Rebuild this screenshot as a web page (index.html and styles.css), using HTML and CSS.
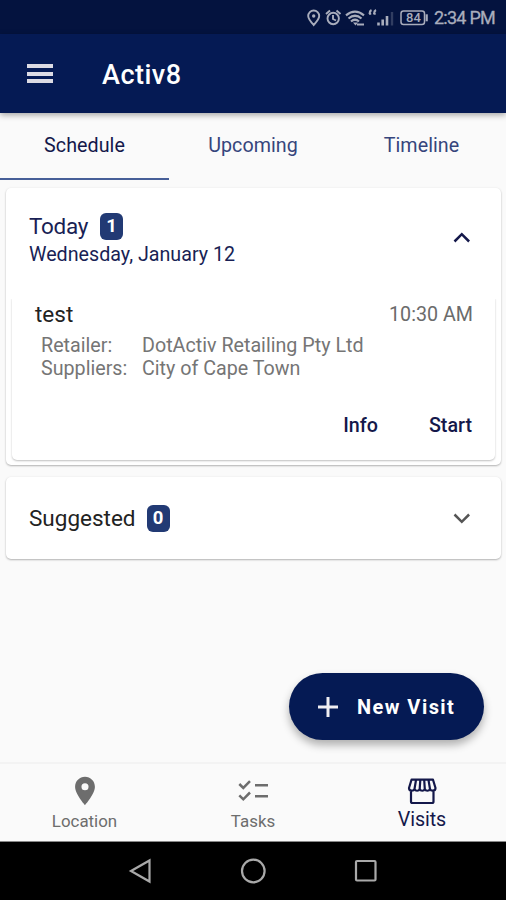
FILE: index.html
```html
<!DOCTYPE html>
<html lang="en">
<head>
<meta charset="utf-8">
<title>Activ8</title>
<link rel="stylesheet" href="styles.css">
</head>
<body>
<div class="app">
  <div class="statusbar">
    <svg class="status-icons" width="122" height="22" viewBox="0 0 122 22" fill="none" stroke="currentColor" stroke-width="1.900">
      <path d="M7.700 19C4.500 15.500 2.200 13 2.200 10A5.400 5.400 0 0 1 13.200 10C13.200 13 10.700 15.500 7.700 19Z"/>
      <circle cx="7.700" cy="10" r="1.700" fill="currentColor" stroke="none"/>
      <circle cx="27.200" cy="12.500" r="5.700"/>
      <path d="M27 9v4l3 1.500M20 8l4-3.500M34.500 8l-4-3.500"/>
      <path d="M40 9.300Q49 2 58 9.300M42.500 12.500Q49 7 55.500 12.500M45 15.500Q49 12 53 15.500" stroke-width="2.200"/>
      <path d="M47 16.500h5l-2.500 3z" fill="currentColor" stroke="none"/>
      <path d="M51 18.500h7" stroke-width="2"/>
      <path d="M65.500 4q-2 1-2 4M70 4q-2 1-2 4M63 7.800h2.200M67.500 7.800h2.200" stroke-width="2"/>
      <path d="M72.500 19.500v-3M76.700 19.500v-6M81 19.500V10" stroke-width="2.600"/>
      <path d="M86 19.500V6" stroke-width="2.400" opacity=".28"/>
      <rect x="95" y="5" width="23.500" height="13.500" rx="2.500" stroke-width="1.500"/>
      <path d="M120.700 8.300v7" stroke-width="2.200"/>
    </svg>
    <span class="battery">84</span>
    <span class="clock">2:34 PM</span>
  </div>
  <header class="appbar">
    <div class="burger"><i></i><i></i><i></i></div>
    <h1>Activ8</h1>
  </header>
  <nav class="tabs">
    <div class="tab active">Schedule</div>
    <div class="tab">Upcoming</div>
    <div class="tab">Timeline</div>
  </nav>
  <main>
    <section class="card today">
      <div class="card-head">
        <div>
          <div class="title"><span class="t-today">Today</span><b class="count">1</b></div>
          <div class="date">Wednesday, January 12</div>
        </div>
        <svg class="chevron" width="18" height="12" viewBox="0 0 18 12"><path d="M1.500 9.500l7.300-7.300 7.300 7.300"/></svg>
      </div>
      <article class="visit">
        <div class="visit-head"><span class="name">test</span><span class="time">10:30 AM</span></div>
        <dl>
          <dt>Retailer:</dt><dd>DotActiv Retailing Pty Ltd</dd>
          <dt>Suppliers:</dt><dd>City of Cape Town</dd>
        </dl>
        <div class="actions"><span>Info</span><span>Start</span></div>
      </article>
    </section>
    <section class="card suggested">
      <div class="title"><span>Suggested</span><b class="count">0</b></div>
      <svg class="chevron" width="18" height="12" viewBox="0 0 18 12"><path d="M1.500 2.500l7.300 7.300 7.300-7.300"/></svg>
    </section>
  </main>
  <div class="fab-row">
    <div class="fab">
      <svg width="20" height="20" viewBox="0 0 20 20" stroke="#f0eef2" stroke-width="3"><path d="M10 0v20M0 10h20"/></svg>
      <span>New Visit</span>
    </div>
  </div>
  <nav class="bottom">
    <div class="item">
      <svg width="34" height="34" viewBox="0 0 24 24" fill="currentColor"><path d="M12 2C8.130 2 5 5.130 5 9c0 5.250 7 13 7 13s7-7.750 7-13c0-3.870-3.130-7-7-7zm0 9.500a2.500 2.500 0 0 1 0-5 2.500 2.500 0 0 1 0 5z"/></svg>
      <span>Location</span>
    </div>
    <div class="item">
      <svg width="34" height="34" viewBox="0 0 34 34" fill="none" stroke="currentColor" stroke-width="2.500"><path d="M3.300 10l4 4L14 7.200M3.300 21.300l4 4 6.700-6.800M19 11.300h13M19 22.300h13"/></svg>
      <span>Tasks</span>
    </div>
    <div class="item selected">
      <svg width="34" height="34" viewBox="0 0 34 34" fill="none" stroke="currentColor" stroke-width="2.200" stroke-linejoin="round"><path d="M6.500 5.700h21.500l2.500 8.300c0 3.300-4.400 3.600-5.500.8-1 2.600-4.200 2.600-5.200 0-1 2.600-4.100 2.600-5.100 0-1 2.600-4.200 2.600-5.200 0-1.100 2.800-5.500 2.500-5.500-.8zM11 6l-1.500 9M15.300 6l-.6 9M19.200 6l.6 9M23.500 6l1.500 9M6 17v10.500q0 1.500 1.500 1.500h19.500q1.500 0 1.500-1.500V17"/></svg>
      <span>Visits</span>
    </div>
  </nav>
  <div class="sysnav">
    <svg width="24" height="26" viewBox="0 0 24 26"><path d="M3 13L21.500 2.500v21z"/></svg>
    <svg width="26" height="26" viewBox="0 0 26 26"><circle cx="13.300" cy="13" r="11.300"/></svg>
    <svg width="24" height="24" viewBox="0 0 24 24"><rect x="2" y="2" width="19.500" height="19.500" rx="1"/></svg>
  </div>
</div>
</body>
</html>
```
FILE: styles.css
```css
* { box-sizing: border-box; margin: 0; padding: 0; }
body { width: 506px; height: 900px; font-family: Roboto, sans-serif; background: #fafafa; overflow: hidden; }
svg { display: block; flex: none; }
span { white-space: nowrap; }
.app { display: flex; flex-direction: column; height: 900px; }

.statusbar { position: relative; height: 34px; background: #04133f; color: #a9adbc; display: flex; align-items: center; padding-left: 306px; }
.battery { position: absolute; left: 406px; top: 10px; font-size: 13px; line-height: 16px; font-weight: 500; }
.clock { margin-left: 6px; font-size: 18px; line-height: 22px; padding-top: 2px; letter-spacing: -.75px; -webkit-text-stroke: .3px; }

.appbar { height: 79px; background: #051a54; display: flex; align-items: center; padding-left: 27px; box-shadow: 0 2px 6px rgba(0,0,0,.35); z-index: 1; }
.burger { display: flex; flex-direction: column; gap: 3.500px; width: 26px; }
.burger i { height: 4px; background: #dcdbe4; }
h1 { margin-left: 49px; padding-top: 2px; font-size: 27px; line-height: 32px; font-weight: 500; letter-spacing: .5px; color: #fff; }

.tabs { height: 67px; display: grid; grid-template-columns: 169px 1fr 169px; }
.tab { display: flex; justify-content: center; padding-top: 21px; font-size: 19.700px; line-height: 24px; letter-spacing: .05px; color: #36457c; border-bottom: 2px solid transparent; }
.tab.active { color: #14184a; border-color: #475f98; }

main { display: flex; flex-direction: column; gap: 12px; padding: 8px 5px 0 6px; }
.card { background: #fff; border-radius: 5px; box-shadow: 0 1px 2px rgba(0,0,0,.28), 0 0 3px rgba(0,0,0,.04); }
.today { height: 277px; padding: 24px 6px 5px; display: flex; flex-direction: column; color: #191f55; }
.card-head { display: flex; justify-content: space-between; align-items: center; padding: 0 24px 0 17px; height: 55px; }
.title { display: flex; align-items: center; font-size: 22.500px; line-height: 28px; }
.t-today { letter-spacing: -.3px; }
.count { display: flex; justify-content: center; align-items: center; width: 23px; height: 27px; border-radius: 6px; background: #223a74; color: #fff; font-size: 18.500px; font-weight: 700; margin-left: 12px; }
.date { font-size: 19.700px; line-height: 27px; padding-top: 1px; margin-bottom: -1px; }
.chevron { fill: none; stroke: #14184a; stroke-width: 2.500; }
.card-head .chevron { margin-top: -4px; }
.visit { margin-top: 28px; height: 166px; padding: 5px 22px 0; border-radius: 5px; box-shadow: 0 1px 2px rgba(0,0,0,.25); clip-path: inset(4px -4px -4px -4px); }
.visit-head { display: flex; justify-content: space-between; align-items: center; line-height: 26px; }
.name { font-size: 22.500px; color: #222; padding-left: 1px; }
.time { font-size: 19.700px; color: #6b6b6b; padding-top: 2px; }
dl { display: grid; grid-template-columns: 101px 1fr; margin: 7px 0 0 7px; font-size: 19.700px; line-height: 22.500px; color: #757575; }
.actions { display: flex; justify-content: flex-end; gap: 51px; margin: 34px 1px 0 0; font-size: 19.700px; line-height: 24px; font-weight: 500; color: #14184a; }
.suggested { height: 82px; display: flex; justify-content: space-between; align-items: center; padding: 0 30px 0 23px; color: #222; }
.suggested .count { margin-left: 11px; }
.suggested .chevron { stroke: #555; }

.fab-row { display: flex; justify-content: flex-end; margin-top: auto; padding: 0 22px 22px; }
.fab { width: 195px; height: 67px; border-radius: 34px; background: #051a54; color: #fff; display: flex; align-items: center; padding-left: 29px; gap: 19px; box-shadow: 0 5px 9px rgba(0,0,0,.3); font-size: 20px; font-weight: 700; letter-spacing: 1.450px; }

.bottom { height: 80px; display: grid; grid-template-columns: 169px 1fr 169px; border-top: 2px solid #f3f3f3; border-bottom: 1px solid #888; color: #6d6d6d; }
.item { display: flex; flex-direction: column; align-items: center; padding-top: 10px; font-size: 16.900px; line-height: 22px; }
.item span { padding-top: 2px; }
.item.selected { color: #14184a; font-size: 19.700px; padding-left: 1px; }
.item.selected span { padding-top: 1px; letter-spacing: -.1px; }

.sysnav { height: 58px; background: #000; display: flex; justify-content: center; align-items: center; gap: 88px; padding-right: 1px; }
.sysnav svg { fill: none; stroke: #a9a9a9; stroke-width: 2.200; }
```
